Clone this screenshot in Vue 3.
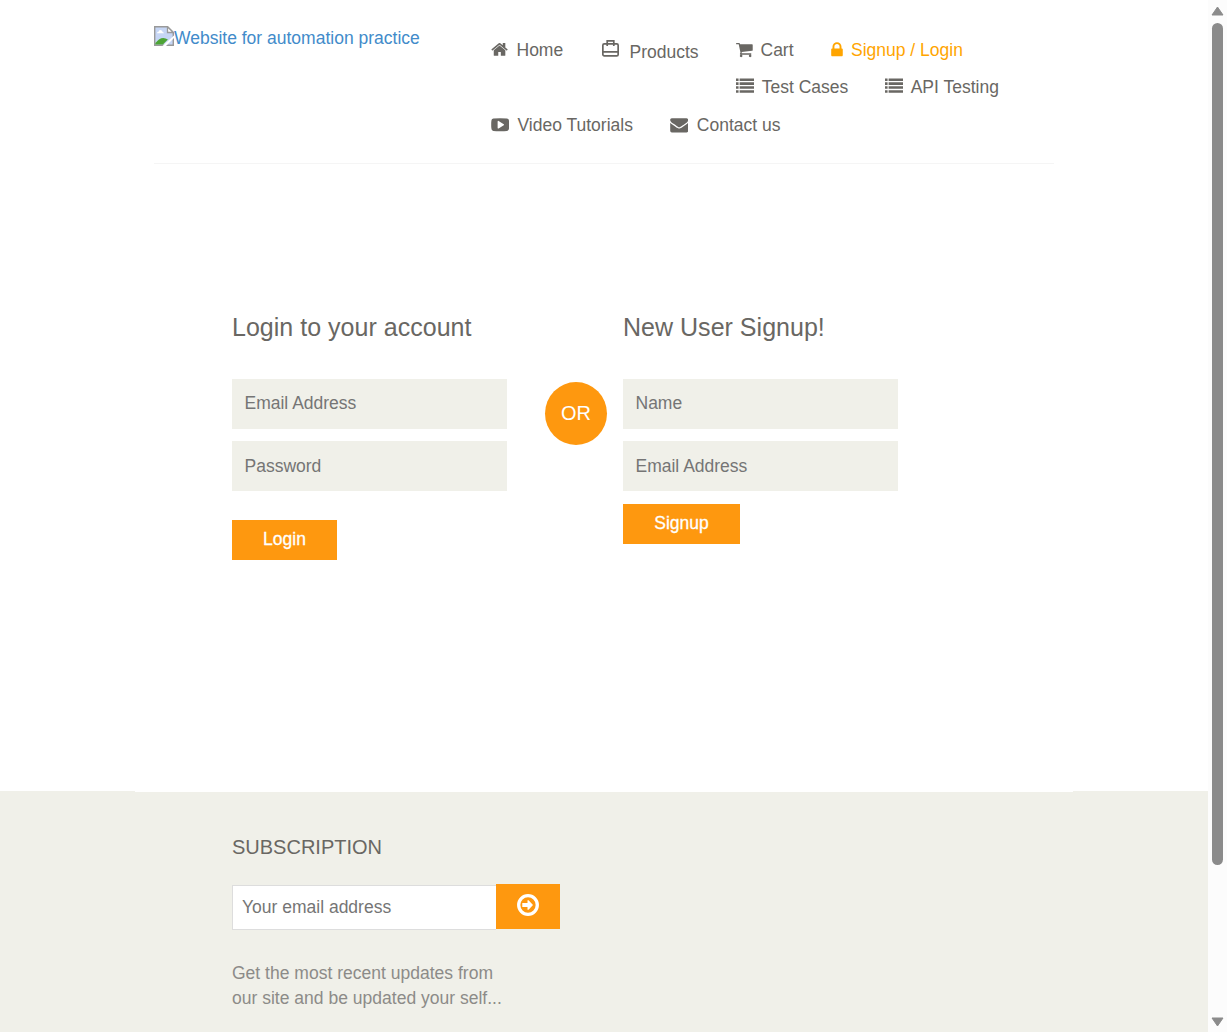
<script setup>
const paths = {
  home: 'M1472 992v480q0 26-19 45t-45 19h-384v-384h-256v384h-384q-26 0-45-19t-19-45v-480q0-1 .5-3t.5-3l575-474 575 474q1 2 1 6zm223-69l-62 74q-8 9-21 11h-3q-13 0-21-7l-692-577-692 577q-12 8-24 7-13-2-21-11l-62-74q-8-10-7-23.5t11-21.5l719-599q32-26 76-26t76 26l244 204v-195q0-14 9-23t23-9h192q14 0 23 9t9 23v408l219 182q10 8 11 21.5t-7 23.5z',
  cart: 'M704 1536q0 52-38 90t-90 38-90-38-38-90 38-90 90-38 90 38 38 90zm896 0q0 52-38 90t-90 38-90-38-38-90 38-90 90-38 90 38 38 90zm128-1088v512q0 24-16.5 42.5t-40.5 21.5l-1044 122q13 60 13 70 0 16-24 64h920q26 0 45 19t19 45-19 45-45 19h-1024q-26 0-45-19t-19-45q0-11 8-31.5t16-36 21.5-40 15.5-29.5l-177-823h-204q-26 0-45-19t-19-45 19-45 45-19h256q16 0 28.5 6.5t19.5 15.5 13 24.5 8 26 5.5 29.5 4.5 26h1201q26 0 45 19t19 45z',
  lock: 'M640 768h512v-192q0-106-75-181t-181-75-181 75-75 181v192zm832 96v576q0 40-28 68t-68 28h-960q-40 0-68-28t-28-68v-576q0-40 28-68t68-28h32v-192q0-184 132-316t316-132 316 132 132 316v192h32q40 0 68 28t28 68z',
  list: 'M0 120h256v260H0zM360 120h1432v260H360zM0 510h256v260H0zM360 510h1432v260H360zM0 900h256v260H0zM360 900h1432v260H360zM0 1290h256v260H0zM360 1290h1432v260H360z',
  video: 'M1280 896q0-37-30-54l-512-320q-31-20-65-2-33 18-33 56v640q0 38 33 56 16 8 31 8 20 0 34-10l512-320q30-17 30-54zm512 0q0 96-1 150t-8.5 136.5-22.5 147.5q-16 73-69 123t-124 58q-222 25-671 25t-671-25q-71-8-124.5-58t-69.5-123q-14-65-21.5-147.5t-8.5-136.5-1-150 1-150 8.5-136.5 22.5-147.5q16-73 69-123t124-58q222-25 671-25t671 25q71 8 124.5 58t69.5 123q14 65 21.5 147.5t8.5 136.5 1 150z',
  mail: 'M1792 710v794q0 66-47 113t-113 47h-1472q-66 0-113-47t-47-113v-794q44 49 101 87 362 246 497 345 57 42 92.5 65.5t94.5 48 110 24.5h2q51 0 110-24.5t94.5-48 92.5-65.5q170-123 498-345 57-39 100-87zm0-294q0 79-49 151t-122 123q-376 261-468 325-10 7-42.5 31t-54 38.5-52 32.5-57.5 27-50 9h-2q-23 0-50-9t-57.5-27-52-32.5-54-38.5-42.5-31q-91-64-262-182.5t-205-142.5q-62-42-117-115.5t-55-136.5q0-78 41.5-130t118.5-52h1472q65 0 112.5 47t47.5 113z',
}
const rows = [
  [
    { icon: 'home', label: 'Home', box: '46 60 1792 1792' },
    { icon: 'products', label: 'Products' },
    { icon: 'cart', label: 'Cart', box: '64 50 1792 1792' },
    { icon: 'lock', label: 'Signup / Login', box: '300 60 1792 1700' },
  ],
  [
    { icon: 'list', label: 'Test Cases', box: '0 80 1792 1792' },
    { icon: 'list', label: 'API Testing', box: '0 80 1792 1792' },
  ],
  [
    { icon: 'video', label: 'Video Tutorials', box: '-20 30 1792 1792' },
    { icon: 'mail', label: 'Contact us', box: '-20 30 1792 1792' },
  ],
]
</script>

<template>
  <div class="window">
    <div class="page">
      <header class="header">
        <a class="logo">
          <svg class="broken" width="20" height="20" viewBox="0 0 20 20">
            <path d="M.7.7h12.800l5.800 5.800v12.800H.7z" fill="#c6d6f5" stroke="#999" stroke-width="1.400" />
            <path d="M3 7.200q0-1.700 1.800-1.700Q5.300 3.600 7 4.200q1.600.300 1.500 1.700 1.500.100 1.500 1.300z" fill="#fff" />
            <path d="M1.400 18.600v-1.600q6-8 12.500-3.500l-5 5.100z" fill="#4da435" />
            <path d="M13.500.7v5.800h5.800z" fill="#fff" stroke="#999" stroke-width="1.300" />
            <path d="M8.500 20L20 9.500V12L12 20z" fill="#fff" />
          </svg><span>Website for automation practice</span>
        </a>
        <nav class="nav">
          <div v-for="(row, i) in rows" :key="i" class="row" :class="'row-' + (i + 1)">
            <a v-for="item in row" :key="item.label" class="item" :class="item.icon">
              <span class="slot">
                <svg v-if="item.icon === 'products'" class="bag" width="17" height="17" viewBox="0 0 17 17" fill="none" stroke="currentColor" stroke-width="1.700">
                  <rect x=".85" y="3.900" width="15.300" height="11.900" rx="1.400" />
                  <path d="M5.200 6V.85h6.600V6M1 11.800h15" />
                </svg>
                <svg v-else width="18" height="18" :viewBox="item.box"><path :d="paths[item.icon]" fill="currentColor" /></svg>
              </span><span class="label">{{ item.label }}</span>
            </a>
          </div>
        </nav>
      </header>

      <main class="forms">
        <form class="login" @submit.prevent>
          <h2>Login to your account</h2>
          <input type="email" placeholder="Email Address">
          <input class="second" type="password" placeholder="Password">
          <button class="btn">Login</button>
        </form>
        <div class="or">OR</div>
        <form class="signup" @submit.prevent>
          <h2>New User Signup!</h2>
          <input type="text" placeholder="Name">
          <input class="second" type="email" placeholder="Email Address">
          <button class="btn">Signup</button>
        </form>
      </main>

      <footer class="footer">
        <div class="seam"></div>
        <h3>Subscription</h3>
        <form class="subscribe" @submit.prevent>
          <input type="email" placeholder="Your email address">
          <button>
            <svg width="22" height="22" viewBox="0 0 22 22">
              <circle cx="11" cy="11" r="9.300" fill="none" stroke="#fff" stroke-width="3.300" />
              <path d="M5.300 9.100h5.200V7q0-1.700 1.300-.6l4.200 4.600-4.200 4.600q-1.300 1.100-1.300-.6v-2.100H5.300z" fill="#fff" />
            </svg>
          </button>
        </form>
        <p>Get the most recent updates from<br>our site and be updated your self...</p>
      </footer>
    </div>
    <div class="scrollbar">
      <svg width="13" height="10" viewBox="0 0 13 10"><path d="M6.500 1L12 9H1z" fill="#8b8b8b" stroke="#8b8b8b" stroke-linejoin="round" /></svg>
      <div class="thumb"></div>
      <svg class="down" width="13" height="10" viewBox="0 0 13 10"><path d="M6.500 9L12 1H1z" fill="#8b8b8b" stroke="#8b8b8b" stroke-linejoin="round" /></svg>
    </div>
  </div>
</template>

<style>
body { margin: 0; overflow: hidden; background: #fff; }
</style>

<style scoped>
* { box-sizing: border-box; }
.window {
  display: flex;
  height: 1032px;
  overflow: hidden;
  font: 17.5px/25px "Liberation Sans", Arial, sans-serif;
  color: #696763;
}
.page { width: 1208px; display: flex; flex-direction: column; }
.header {
  display: flex;
  width: 900px;
  height: 164px;
  margin-left: 154px;
  border-bottom: 1px solid #f5f5f5;
}
.logo { display: flex; width: 337px; padding-top: 26px; color: #428bca; line-height: 24px; white-space: nowrap; }
.broken { flex: none; }
.nav { padding-top: 38px; }
.row { display: flex; height: 37px; }
.row-2 { height: 38px; padding-left: 245px; }
.row-2 .label { margin-top: -0.5px; }
.item { display: flex; height: 25px; white-space: nowrap; }
.slot { width: 26px; flex: none; padding-top: 3px; line-height: 0; }
.home { width: 111px; }
.home .slot { width: 25.5px; }
.products { width: 134px; }
.products .slot { width: 27.5px; padding-top: 2px; }
.products .label { padding-top: 2px; }
.cart { width: 95px; }
.cart .slot { width: 24.5px; }
.lock { color: #ffa500; }
.lock .slot { width: 20px; }
.list { width: 149px; }
.list .slot { width: 25.7px; }
.video { width: 179px; }
.video .slot { width: 26.5px; }
.mail .slot { width: 26.8px; }

.forms { display: flex; height: 627px; padding: 148px 0 0 232px; }
.login, .signup { width: 275px; display: flex; flex-direction: column; align-items: flex-start; }
h2 { margin: 0 0 37px; font-size: 25px; font-weight: 400; line-height: 30px; letter-spacing: .02px; white-space: nowrap; }
.forms input {
  width: 275px;
  height: 50px;
  margin: 0 0 12px;
  padding: 0 12.5px 2px;
  border: 0;
  background: #f0f0e9;
  font: inherit;
}
.forms .second { padding-bottom: 0; }
input::placeholder { color: #757575; opacity: 1; }
.btn {
  height: 40px;
  padding: 0 0 2px;
  border: 0;
  background: #fe980f;
  color: #fff;
  font: inherit;
  -webkit-text-stroke: .300px #fff;
}
.login .btn { width: 105px; margin-top: 17px; }
.signup .btn { width: 117px; margin-top: 1px; }
.or {
  width: 62px;
  height: 63px;
  margin: 70px 16px 0 38px;
  border-radius: 50%;
  background: #fe980f;
  color: #fff;
  font-size: 20px;
  line-height: 62px;
  text-align: center;
}
.footer { flex: 1; padding-left: 232px; background: #f0f0e9; }
.seam { width: 938px; height: 1px; margin-left: -97px; background: #fff; }
h3 { margin: 42px 0 24px; font-size: 20px; font-weight: 400; line-height: 26px; text-transform: uppercase; }
.subscribe { display: flex; align-items: flex-start; height: 46px; }
.subscribe input {
  width: 264px;
  height: 45px;
  margin-top: 1px;
  padding: 0 9px 1px;
  border: 1px solid #ddd;
  border-right: 0;
  background: #fff;
  font: inherit;
}
.subscribe button { width: 64px; height: 45px; padding: 0 1px 3px 0; border: 0; background: #fe980f; line-height: 0; }
p { margin: 31px 0 0; color: #8c8b88; white-space: nowrap; letter-spacing: .01px; }
.scrollbar { width: 19px; display: flex; flex-direction: column; align-items: center; padding: 6px 0 5px; background: #fcfcfc; }
.thumb { width: 11px; height: 842px; margin-top: 7px; border-radius: 6px; background: #8b8b8b; }
.down { margin-top: auto; }
</style>
